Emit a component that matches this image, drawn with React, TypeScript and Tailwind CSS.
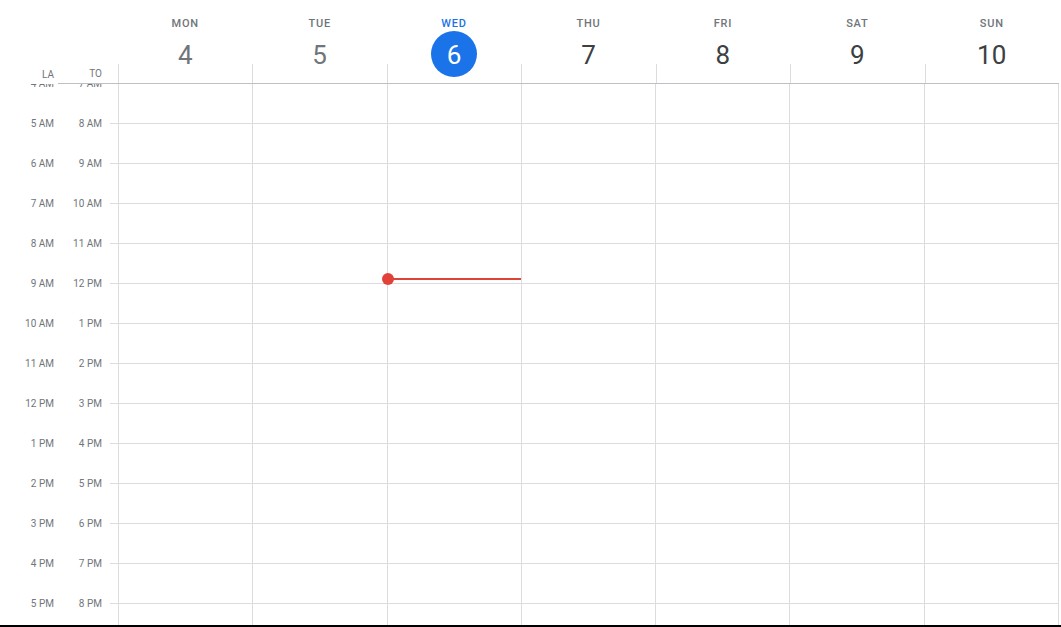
import React from 'react';

const days = [
  { name: 'MON', num: 4, past: true },
  { name: 'TUE', num: 5, past: true },
  { name: 'WED', num: 6, today: true },
  { name: 'THU', num: 7 },
  { name: 'FRI', num: 8 },
  { name: 'SAT', num: 9 },
  { name: 'SUN', num: 10 },
];

// LA / Tokyo pairs, one per hour row
const hours = [
  ['4 AM', '7 AM'],
  ['5 AM', '8 AM'],
  ['6 AM', '9 AM'],
  ['7 AM', '10 AM'],
  ['8 AM', '11 AM'],
  ['9 AM', '12 PM'],
  ['10 AM', '1 PM'],
  ['11 AM', '2 PM'],
  ['12 PM', '3 PM'],
  ['1 PM', '4 PM'],
  ['2 PM', '5 PM'],
  ['3 PM', '6 PM'],
  ['4 PM', '7 PM'],
  ['5 PM', '8 PM'],
];

const App: React.FC = () => {
  return (
    <div
      className="w-[1061px] h-[627px] flex flex-col bg-white overflow-hidden border-b-2 border-black text-[#70757a]"
      style={{ fontFamily: 'Roboto, "Liberation Sans", sans-serif' }}
    >
      {/* 요일 헤더 */}
      <div className="relative z-10 flex h-[84px] shrink-0 bg-white pr-[2px]">
        <div className="w-[58px] shrink-0 flex items-end">
          <div className="w-[54px] text-right text-[10px] leading-[12px] mb-[3px]">LA</div>
        </div>
        <div className="flex-1 flex border-b border-[#bdc1c6]">
          <div className="w-[60px] shrink-0 flex items-end">
            <div className="w-[44px] text-right text-[10px] leading-[12px] mb-[3px]">TO</div>
          </div>
          {days.map((d) => (
            <div key={d.name} className="flex-1 flex flex-col">
              <div className="h-[64px] flex flex-col items-center">
                <div
                  className={`mt-[18px] text-[11px] leading-[11px] font-medium tracking-[0.8px] ${
                    d.today ? 'text-[#1a73e8]' : 'text-[#70757a]'
                  }`}
                >
                  {d.name}
                </div>
                <div
                  className={`mt-[2px] w-[46px] h-[46px] shrink-0 rounded-full flex items-center justify-center text-[26px] leading-none ${
                    d.today
                      ? 'bg-[#1a73e8] text-white'
                      : d.past
                      ? 'text-[#70757a]'
                      : 'text-[#3c4043]'
                  }`}
                >
                  <span className="mt-[1px]">{d.num}</span>
                </div>
              </div>
              <div className="flex-1 border-l border-[#dadce0]" />
            </div>
          ))}
        </div>
      </div>

      {/* 시간 그리드 */}
      <div className="flex-1 min-h-0 -mt-px overflow-hidden pr-[2px]">
        {hours.map(([la, to], i) => (
          <div key={la} className="flex h-10 shrink-0">
            <div className="w-[110px] shrink-0 flex text-[10px] leading-[12px]">
              <div className="w-[54px] text-right -mt-[5px]">{la}</div>
              <div className="w-[48px] text-right -mt-[5px]">{to}</div>
            </div>
            <div className="w-[8px] shrink-0 border-t border-[#dadce0]" />
            {days.map((d, j) => (
              <div
                key={d.name}
                className={`relative flex-1 border-l border-t border-[#dadce0] ${
                  j === 6 ? 'border-r' : ''
                }`}
              >
                {i === 4 && d.today && (
                  <>
                    <div className="absolute z-10 left-0 right-0 top-[34px] h-[2px] bg-[#dc4437]" />
                    <div className="absolute z-10 -left-[6px] top-[29px] w-3 h-3 rounded-full bg-[#e2413a]" />
                  </>
                )}
              </div>
            ))}
          </div>
        ))}
      </div>
    </div>
  );
};

export default App;
